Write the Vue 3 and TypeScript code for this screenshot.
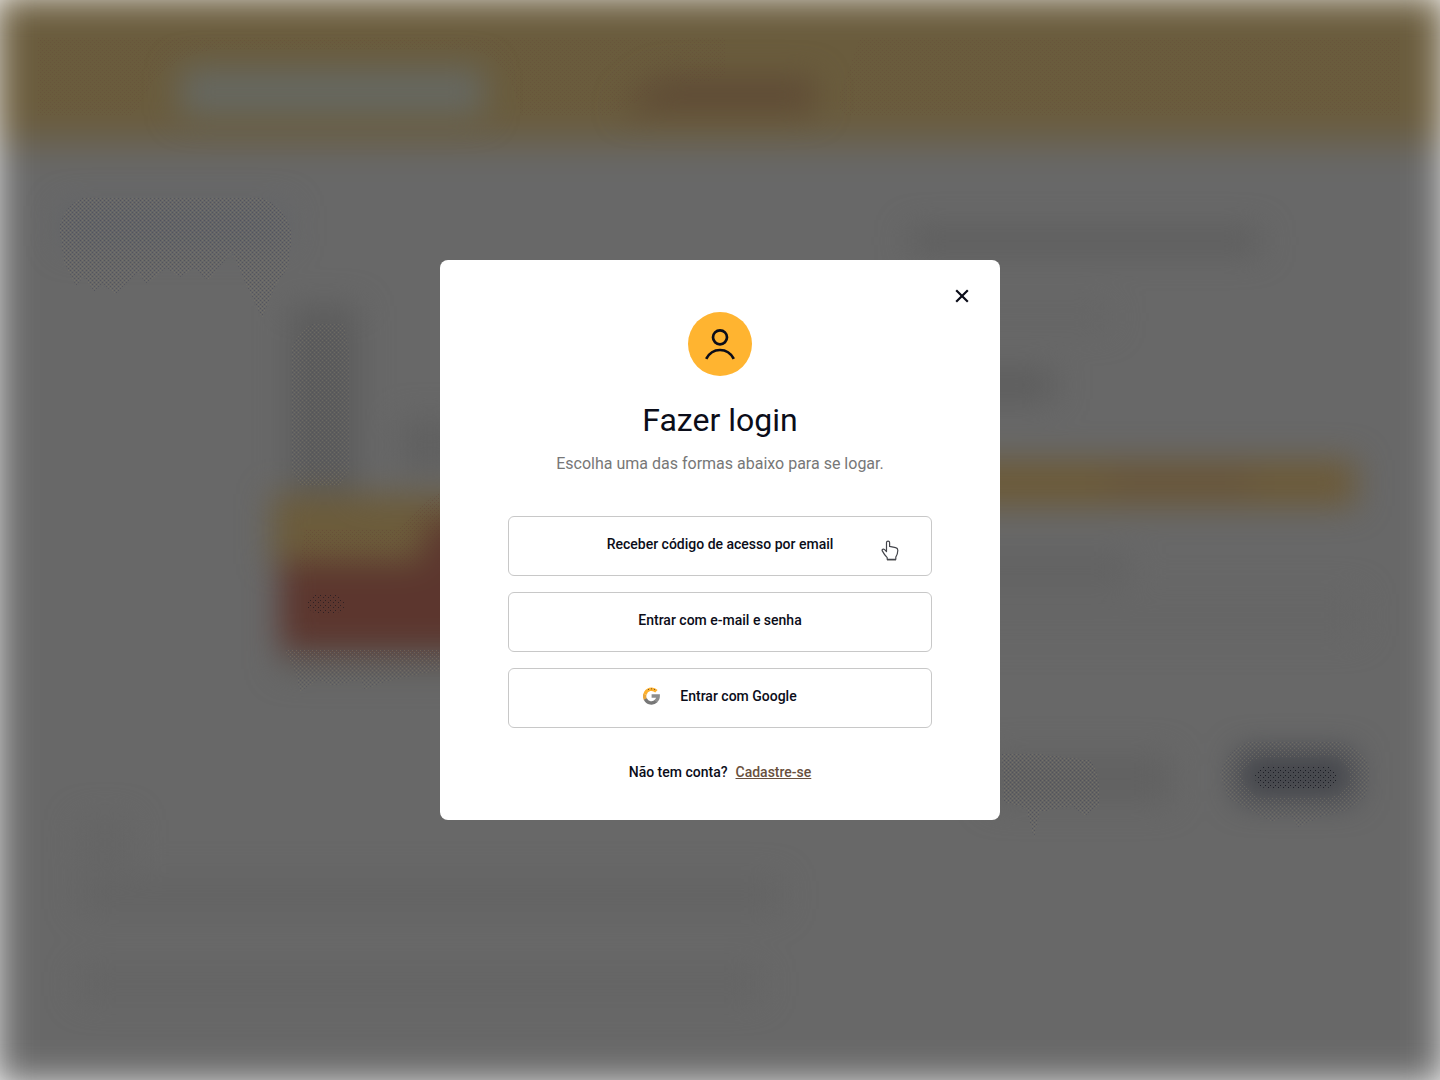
<script setup lang="ts">
import { ref } from 'vue'

interface LoginOption {
  id: string
  label: string
  google?: boolean
}

const open = ref(true)

const options: LoginOption[] = [
  { id: 'code', label: 'Receber código de acesso por email' },
  { id: 'password', label: 'Entrar com e-mail e senha' },
  { id: 'google', label: 'Entrar com Google', google: true },
]
</script>

<template>
  <main class="page">
    <!-- Shop page behind the dialog, dimmed and out of focus -->
    <svg class="backdrop" viewBox="0 0 1440 1080" preserveAspectRatio="none" aria-hidden="true">
      <defs>
        <filter id="soft" filterUnits="userSpaceOnUse" x="-80" y="-80" width="1600" height="1240" color-interpolation-filters="sRGB">
          <feGaussianBlur stdDeviation="19" />
        </filter>
        <filter id="soft-inner" filterUnits="userSpaceOnUse" x="0" y="0" width="1440" height="1080" color-interpolation-filters="sRGB">
          <feGaussianBlur stdDeviation="16" />
        </filter>
        <pattern id="dots" width="4" height="4" patternUnits="userSpaceOnUse">
          <rect width="1" height="1" fill="#5f3832" />
          <rect x="2" y="2" width="1" height="1" fill="#5f3832" />
        </pattern>
        <pattern id="grain" width="4" height="4" patternUnits="userSpaceOnUse">
          <rect width="1" height="1" fill="#4c4d58" />
          <rect x="2" y="2" width="1" height="1" fill="#4c4d58" />
          <rect x="2" width="1" height="1" fill="#7c776a" />
          <rect y="2" width="1" height="1" fill="#7c776a" />
        </pattern>
        <pattern id="specks" width="5" height="5" patternUnits="userSpaceOnUse">
          <rect width="1" height="1" fill="#11131b" />
          <rect x="3" y="2" width="1" height="1" fill="#11131b" />
        </pattern>
      </defs>
      <g filter="url(#soft)">
        <rect x="-6" y="-6" width="1452" height="1092" fill="#686868" />
        <rect x="-6" y="-6" width="1452" height="148" fill="#6a5c3d" />
      </g>
      <g filter="url(#soft-inner)">
        <rect x="180" y="68" width="304" height="48" rx="4" fill="#666861" />
        <path d="M625 104 L660 78 H815 V112 H625Z" fill="#5e4a35" />
        <rect x="290" y="306" width="68" height="190" fill="#5c5c5c" />
        <rect x="400" y="420" width="60" height="50" fill="#606060" />
        <rect x="272" y="494" width="230" height="70" fill="#6c5c3b" />
        <path d="M430 520 H520 V650 H280 V562 H420Z" fill="#5c362e" />
        <rect x="280" y="652" width="200" height="18" fill="#5c5b58" />
        <rect x="910" y="230" width="350" height="22" fill="#5c5c5c" />
        <rect x="910" y="306" width="200" height="22" fill="#656565" />
        <rect x="960" y="370" width="94" height="30" fill="#5c5c5c" />
        <rect x="960" y="460" width="396" height="46" fill="#6c5a38" />
        <rect x="1110" y="475" width="140" height="14" fill="#64503a" />
        <rect x="960" y="556" width="170" height="26" fill="#616161" />
        <rect x="960" y="594" width="400" height="42" fill="#666" />
        <rect x="990" y="755" width="180" height="48" fill="#616161" />
        <rect x="1238" y="752" width="116" height="48" fill="#42444a" />
        <rect x="80" y="820" width="50" height="46" fill="#656565" />
        <rect x="80" y="880" width="700" height="30" fill="#636363" />
        <rect x="80" y="970" width="680" height="28" fill="#646464" />
        <rect x="62" y="206" width="226" height="40" fill="#626468" />
      </g>
      <path fill="url(#dots)" opacity=".2" d="M38 38 H725 V76 Q700 88 665 80 L640 100 L610 116 H520 Q512 58 470 50 H210 Q160 60 140 105 Q138 116 125 116 H38Z" />
      <path fill="url(#dots)" opacity=".2" d="M860 38 H1400 V116 H845 Q834 105 842 88Z" />
      <path fill="url(#grain)" opacity=".7" d="M82 198 H262 Q288 208 292 236 L288 268 L276 284 L262 318 L244 280 L232 252 L222 264 L208 280 L194 268 L180 277 L166 268 L146 284 L138 272 L116 294 L102 284 L94 292 L84 276 L76 286 L64 262 L59 228 Q64 206 82 198Z" />
      <path fill="url(#grain)" opacity=".5" d="M312 324 H344 L349 350 V470 L340 485 L300 485 L292 470 V346 Q300 330 312 324Z" />
      <path fill="url(#dots)" opacity=".3" d="M305 530 H395 L440 490 V570 H298Z" />
      <path fill="url(#grain)" opacity=".5" d="M285 650 H440 V670 L385 682 L364 690 L361 680 L333 686 L318 680 L300 692 L296 674Z" />
      <ellipse cx="326" cy="604" rx="19" ry="11" fill="url(#specks)" opacity=".6" />
      <path fill="url(#grain)" opacity=".7" d="M1002 754 H1040 L1090 760 Q1100 770 1100 804 L1085 816 L1072 806 L1040 812 L1034 838 L1026 808 L1004 802Z" />
      <path fill="url(#grain)" opacity=".5" fill-rule="evenodd" d="M1248 742 H1340 Q1370 752 1370 774 L1366 796 L1348 810 L1324 816 L1298 827 L1290 814 L1272 822 L1228 798 L1220 774 Q1226 750 1248 742Z M1262 758 Q1242 762 1242 776 Q1248 798 1266 798 H1330 Q1350 790 1350 776 Q1346 756 1330 756Z" />
      <rect x="1255" y="766" width="82" height="22" rx="11" fill="url(#specks)" opacity=".8" />
    </svg>

    <section v-if="open" class="dialog" role="dialog" aria-modal="true" aria-labelledby="login-title">
      <button class="close" type="button" aria-label="Fechar" @click="open = false">
        <svg width="14" height="14" viewBox="0 0 14 14" fill="none" stroke="#0b0d19" stroke-width="2.2">
          <path d="M1.2 1.2 12.8 12.8M12.8 1.2 1.2 12.8" />
        </svg>
      </button>

      <svg class="avatar" width="64" height="64" viewBox="0 0 64 64" fill="none" aria-hidden="true">
        <circle cx="32" cy="32" r="32" fill="#ffb430" />
        <g stroke="#0b0d19" stroke-width="2.7">
          <circle cx="32" cy="25.3" r="7" />
          <path d="M18.2 46.8C21.2 41.2 26.2 38 32 38s10.8 3.2 13.8 8.8" />
        </g>
      </svg>

      <h1 id="login-title">Fazer login</h1>
      <p class="intro">Escolha uma das formas abaixo para se logar.</p>

      <div class="options">
        <button v-for="option in options" :key="option.id" class="option" type="button">
          <svg v-if="option.google" width="17" height="18" viewBox="0 0 17 18" fill="none" stroke-width="3.4" aria-hidden="true">
            <path d="M2.4 12.4A7 7 0 0 1 1.9 7.2" stroke="#e9a63c" />
            <path d="M2 7.4A6.8 6.8 0 0 1 13.4 4.2" stroke="#fdb02c" />
            <path d="M2.3 12A6.8 6.8 0 0 0 13.2 14" stroke="#777" />
            <path d="M8.6 9H15.2A6.8 6.8 0 0 1 12.6 14.4" stroke="#8d8d8d" />
            <path d="M5 2.5h1M8 1.8h1M11 2.5h1" stroke="#795a31" stroke-width="1" />
          </svg>
          <span>{{ option.label }}</span>
        </button>
        <svg class="pointer" width="18" height="21" viewBox="0 0 18 21" aria-hidden="true">
          <path d="M5.5 11.5V2.6C5.5.6 8.6.6 8.6 2.6V6.4L14.6 7.6C16.2 8 16.9 8.8 16.8 10.4 16.7 13.4 15.9 15.5 14.8 17.2V19.3H6.2V17.6C4 15.4 2.6 13.4 1.3 10.9.6 9.4 2.4 8.4 3.6 9.6Z" fill="#fff" stroke="#44464c" stroke-width="1.2" stroke-linejoin="round" />
          <path d="M6 20.5H15" stroke="#aaa" stroke-width="1" />
        </svg>
      </div>

      <p class="signup">Não tem conta? <a href="#cadastro">Cadastre-se</a></p>
    </section>
  </main>
</template>

<style>
body {
  margin: 0;
  background: #fff;
}
</style>

<style scoped>
.page {
  position: relative;
  display: flex;
  align-items: center;
  justify-content: center;
  min-height: 100vh;
  overflow: hidden;
  font-family: Roboto, "Liberation Sans", sans-serif;
  color: #0b0d19;
}

.backdrop {
  position: absolute;
  inset: 0;
  width: 100%;
  height: 100%;
}

.dialog {
  position: relative;
  box-sizing: border-box;
  display: flex;
  flex-direction: column;
  align-items: center;
  width: 100%;
  max-width: 560px;
  padding: 52px 68px 36px;
  border-radius: 8px;
  background: #fff;
}

.close {
  position: absolute;
  top: 24px;
  right: 26px;
  display: flex;
  align-items: center;
  justify-content: center;
  width: 24px;
  height: 24px;
  padding: 0;
  border: 0;
  background: none;
  cursor: pointer;
}

h1 {
  margin: 24px 0 0;
  font-size: 32px;
  font-weight: 400;
  line-height: 40px;
}

.intro {
  margin: 12px 0 0;
  font-size: 16px;
  line-height: 24px;
  color: #777;
}

.options {
  position: relative;
  display: flex;
  flex-direction: column;
  gap: 16px;
  width: 100%;
  margin-top: 40px;
}

.option {
  box-sizing: border-box;
  display: flex;
  align-items: center;
  justify-content: center;
  gap: 20px;
  height: 60px;
  padding: 0 0 4px;
  border: 1px solid #c8c8c8;
  border-radius: 6px;
  background: #fff;
  color: inherit;
  font: 500 14px/20px Roboto, "Liberation Sans", sans-serif;
  cursor: pointer;
}

.pointer {
  position: absolute;
  top: 24px;
  right: 33px;
  pointer-events: none;
}

.signup {
  display: flex;
  gap: 8px;
  margin: 32px 0 0;
  font-size: 14px;
  font-weight: 500;
  line-height: 24px;
}

.signup a {
  color: #69503d;
}
</style>
